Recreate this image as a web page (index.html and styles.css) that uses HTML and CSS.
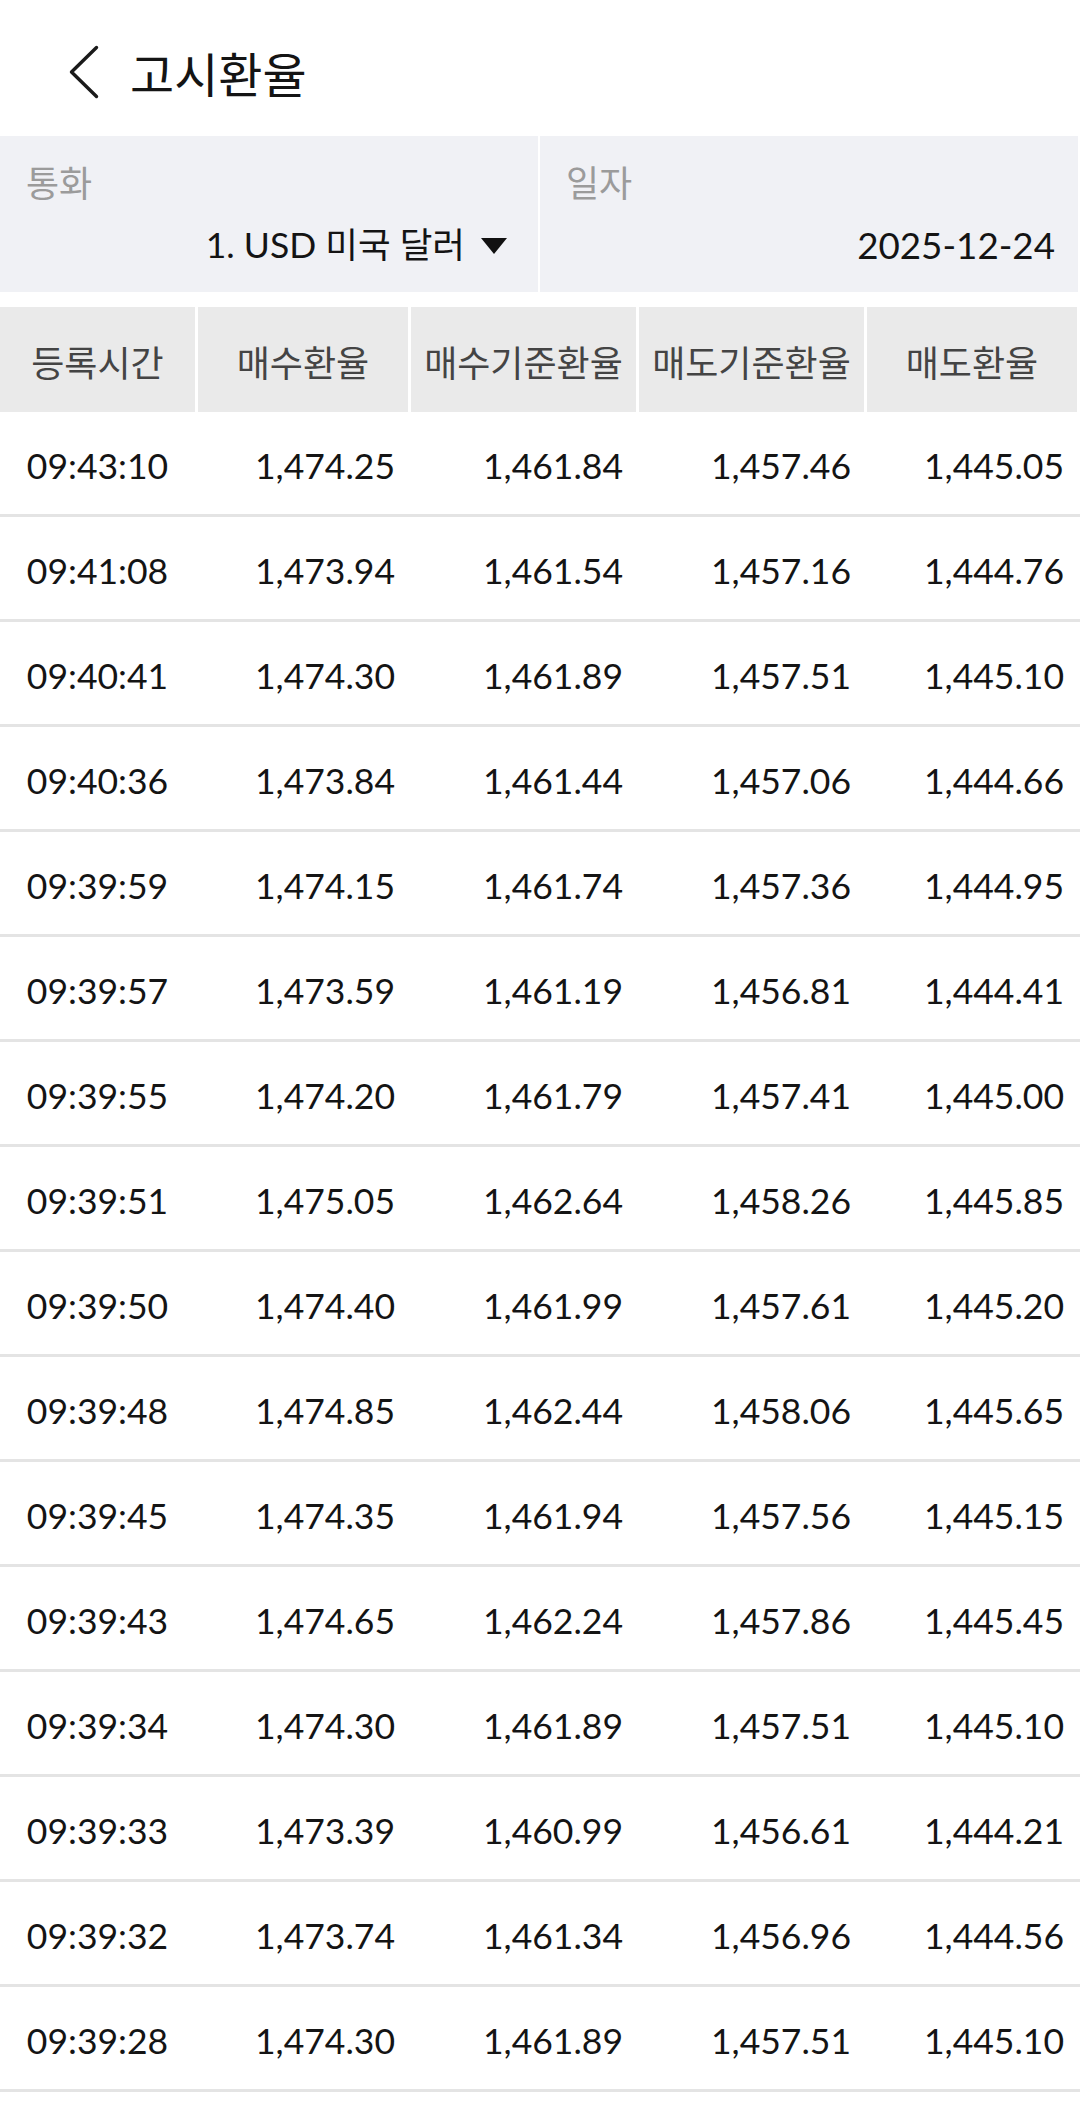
FILE: index.html
```html
<!DOCTYPE html>
<html lang="ko">
<head>
<meta charset="utf-8">
<title>고시환율</title>
<link rel="stylesheet" href="styles.css">
</head>
<body>
<header class="topbar">
  <svg class="back" viewBox="0 0 30 54" width="30" height="54" aria-hidden="true">
    <polyline points="27.5,2.5 2.5,27 27.5,51.5" fill="none" stroke="#1a1a1a" stroke-width="3.4" stroke-linecap="round" stroke-linejoin="round"/>
  </svg>
  <h1 class="title">고시환율</h1>
</header>

<section class="filters">
  <div class="filter">
    <div class="filter-label">통화</div>
    <div class="filter-value">1. USD 미국 달러<span class="caret"></span></div>
  </div>
  <div class="filter">
    <div class="filter-label">일자</div>
    <div class="filter-value date">2025-12-24</div>
  </div>
</section>

<div class="table">
  <div class="thead">
    <div class="th">등록시간</div>
    <div class="th">매수환율</div>
    <div class="th">매수기준환율</div>
    <div class="th">매도기준환율</div>
    <div class="th">매도환율</div>
  </div>
  <div class="tbody">
    <div class="tr"><div class="td time">09:43:10</div><div class="td">1,474.25</div><div class="td">1,461.84</div><div class="td">1,457.46</div><div class="td">1,445.05</div></div>
    <div class="tr"><div class="td time">09:41:08</div><div class="td">1,473.94</div><div class="td">1,461.54</div><div class="td">1,457.16</div><div class="td">1,444.76</div></div>
    <div class="tr"><div class="td time">09:40:41</div><div class="td">1,474.30</div><div class="td">1,461.89</div><div class="td">1,457.51</div><div class="td">1,445.10</div></div>
    <div class="tr"><div class="td time">09:40:36</div><div class="td">1,473.84</div><div class="td">1,461.44</div><div class="td">1,457.06</div><div class="td">1,444.66</div></div>
    <div class="tr"><div class="td time">09:39:59</div><div class="td">1,474.15</div><div class="td">1,461.74</div><div class="td">1,457.36</div><div class="td">1,444.95</div></div>
    <div class="tr"><div class="td time">09:39:57</div><div class="td">1,473.59</div><div class="td">1,461.19</div><div class="td">1,456.81</div><div class="td">1,444.41</div></div>
    <div class="tr"><div class="td time">09:39:55</div><div class="td">1,474.20</div><div class="td">1,461.79</div><div class="td">1,457.41</div><div class="td">1,445.00</div></div>
    <div class="tr"><div class="td time">09:39:51</div><div class="td">1,475.05</div><div class="td">1,462.64</div><div class="td">1,458.26</div><div class="td">1,445.85</div></div>
    <div class="tr"><div class="td time">09:39:50</div><div class="td">1,474.40</div><div class="td">1,461.99</div><div class="td">1,457.61</div><div class="td">1,445.20</div></div>
    <div class="tr"><div class="td time">09:39:48</div><div class="td">1,474.85</div><div class="td">1,462.44</div><div class="td">1,458.06</div><div class="td">1,445.65</div></div>
    <div class="tr"><div class="td time">09:39:45</div><div class="td">1,474.35</div><div class="td">1,461.94</div><div class="td">1,457.56</div><div class="td">1,445.15</div></div>
    <div class="tr"><div class="td time">09:39:43</div><div class="td">1,474.65</div><div class="td">1,462.24</div><div class="td">1,457.86</div><div class="td">1,445.45</div></div>
    <div class="tr"><div class="td time">09:39:34</div><div class="td">1,474.30</div><div class="td">1,461.89</div><div class="td">1,457.51</div><div class="td">1,445.10</div></div>
    <div class="tr"><div class="td time">09:39:33</div><div class="td">1,473.39</div><div class="td">1,460.99</div><div class="td">1,456.61</div><div class="td">1,444.21</div></div>
    <div class="tr"><div class="td time">09:39:32</div><div class="td">1,473.74</div><div class="td">1,461.34</div><div class="td">1,456.96</div><div class="td">1,444.56</div></div>
    <div class="tr"><div class="td time">09:39:28</div><div class="td">1,474.30</div><div class="td">1,461.89</div><div class="td">1,457.51</div><div class="td">1,445.10</div></div>
  </div>
</div>
</body>
</html>
```

FILE: styles.css
```css
* {
  box-sizing: border-box;
}

html, body {
  margin: 0;
  padding: 0;
  background: #ffffff;
}

body {
  width: 1080px;
  height: 2125px;
  overflow: hidden;
  font-family: Lato, "Noto Sans CJK KR", sans-serif;
  color: #141414;
}

.topbar {
  height: 136px;
  display: flex;
  align-items: center;
  padding: 8px 0 0 69px;
}

.back {
  display: block;
  flex: none;
}

.title {
  margin: 0 0 0 31px;
  font-family: "Noto Sans CJK KR", sans-serif;
  font-size: 48px;
  font-weight: 400;
  line-height: 58px;
  color: #141414;
}

.filters {
  display: grid;
  grid-template-columns: 538px 538px;
  column-gap: 2px;
  width: 1078px;
}

.filter {
  background: #f0f1f5;
  height: 156px;
  display: flex;
  flex-direction: column;
  padding: 23px 0 0 26px;
}

.filter-label {
  font-family: "Noto Sans CJK KR", sans-serif;
  font-size: 36px;
  line-height: 44px;
  color: #9b9b9b;
}

.filter-value {
  margin-top: 20px;
  font-size: 35.5px;
  line-height: 44px;
  color: #141414;
  padding-right: 31px;
  display: flex;
  justify-content: flex-end;
  align-items: center;
}

.filter-value.date {
  padding-right: 23px;
  font-size: 36.75px;
}

.caret {
  width: 0;
  height: 0;
  margin-left: 16px;
  margin-top: 2px;
  border-left: 13px solid transparent;
  border-right: 13px solid transparent;
  border-top: 16px solid #111111;
}

.table {
  margin-top: 15px;
}

.thead,
.tr {
  display: grid;
  grid-template-columns: 195px 210px 225px 225px 210px;
  column-gap: 3px;
}

.thead {
  height: 105px;
  width: 1077px;
}

.th {
  background: #eaeaea;
  display: flex;
  align-items: center;
  justify-content: center;
  font-family: "Noto Sans CJK KR", sans-serif;
  font-size: 36px;
  color: #444444;
  padding-top: 2px;
}

.tr {
  height: 105px;
  border-bottom: 3px solid #e4e4e4;
  width: 1080px;
}

.td {
  display: flex;
  align-items: center;
  justify-content: flex-end;
  padding: 4px 13px 0 0;
  font-size: 35.5px;
  color: #141414;
}

.td.time {
  justify-content: center;
  padding-right: 0;
}
```
